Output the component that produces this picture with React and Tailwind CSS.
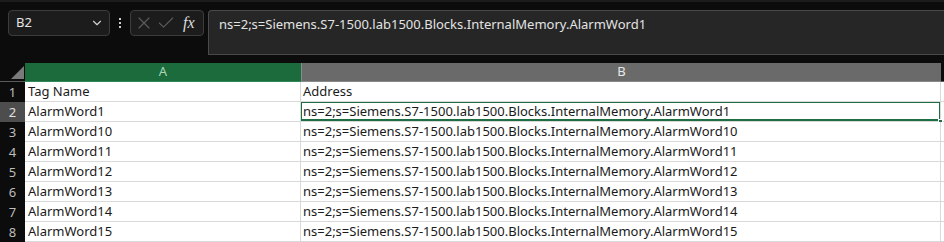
import { ChevronDown, X, Check } from 'lucide-react';

const rows = [
  ['Tag Name', 'Address'],
  ['AlarmWord1', 'ns=2;s=Siemens.S7-1500.lab1500.Blocks.InternalMemory.AlarmWord1'],
  ['AlarmWord10', 'ns=2;s=Siemens.S7-1500.lab1500.Blocks.InternalMemory.AlarmWord10'],
  ['AlarmWord11', 'ns=2;s=Siemens.S7-1500.lab1500.Blocks.InternalMemory.AlarmWord11'],
  ['AlarmWord12', 'ns=2;s=Siemens.S7-1500.lab1500.Blocks.InternalMemory.AlarmWord12'],
  ['AlarmWord13', 'ns=2;s=Siemens.S7-1500.lab1500.Blocks.InternalMemory.AlarmWord13'],
  ['AlarmWord14', 'ns=2;s=Siemens.S7-1500.lab1500.Blocks.InternalMemory.AlarmWord14'],
  ['AlarmWord15', 'ns=2;s=Siemens.S7-1500.lab1500.Blocks.InternalMemory.AlarmWord15'],
];

const font = { fontFamily: '"Noto Sans", "Open Sans", sans-serif' };

export default function App() {
  return (
    <div className="w-[944px] h-[242px] overflow-hidden bg-[#0c0c0c] text-[13px]" style={font}>
      {/* Formula bar area */}
      <div className="h-[2px] bg-[#1c1c1c]" />
      <div className="flex items-start h-[61px] pt-[8px]">
        <div className="ml-[8px] w-[102px] h-[26px] rounded-[4px] border border-[#3c3c3c] bg-[#1c1c1c] flex items-center justify-between pl-[7px] pr-[5px] text-[#e6e6e6]">
          <span>B2</span>
          <ChevronDown className="w-[14px] h-[14px] text-[#cfcfcf]" strokeWidth={2} />
        </div>
        <div className="w-[20px] h-[26px] flex flex-col items-center justify-center gap-[2px]">
          <span className="w-[2px] h-[2px] bg-[#cfcfcf]" />
          <span className="w-[2px] h-[2px] bg-[#cfcfcf]" />
          <span className="w-[2px] h-[2px] bg-[#cfcfcf]" />
        </div>
        <div className="w-[74px] h-[26px] rounded-[4px] border border-[#3c3c3c] bg-[#1c1c1c] flex items-center pl-[3px] gap-[2px]">
          <X className="w-[20px] h-[20px] text-[#5c5c5c]" strokeWidth={1.3} />
          <Check className="w-[20px] h-[20px] text-[#5c5c5c]" strokeWidth={1.3} />
          <span className="ml-[5px] text-[#dcdcdc] italic text-[16px] leading-none" style={{ fontFamily: '"Liberation Serif", serif' }}>fx</span>
        </div>
        <div className="ml-[4px] flex-1 h-[45px] rounded-tl-[4px] border border-r-0 border-[#4a4a4a] bg-[#262626] pl-[10px] pt-[4px] text-[#e3e3e3]">
          ns=2;s=Siemens.S7-1500.lab1500.Blocks.InternalMemory.AlarmWord1
        </div>
      </div>

      {/* Grid */}
      <div className="grid grid-cols-[25px_276px_640px_1fr]">
        <div className="h-[19px] bg-[#0c0c0c] relative border-b border-[#5a5a5a]">
          <div className="absolute right-[1px] bottom-[2px] w-0 h-0 border-l-[13px] border-l-transparent border-b-[13px] border-b-[#7a7a7a]" />
        </div>
        <div className="h-[19px] bg-[#1b6b3c] text-[#a9d8b8] flex items-center justify-center border-b border-[#2e8b57]">A</div>
        <div className="h-[19px] bg-[#6a6a6a] text-[#e8e8e8] flex items-center justify-center border-l border-[#8a8a8a] border-b border-[#5a5a5a]">B</div>
        <div className="h-[19px] bg-[#0c0c0c] border-b border-[#5a5a5a]" />

        {rows.map((r, i) => {
          const sel = i === 1;
          return [
            <div
              key={`h${i}`}
              className={`h-[20px] pt-[1px] flex items-center justify-center ${sel ? 'bg-[#4d4d4d] text-[#e0e0e0]' : 'bg-[#0c0c0c] text-[#bdbdbd]'}`}
            >
              {i + 1}
            </div>,
            <div key={`a${i}`} className="h-[20px] pt-[1px] bg-white border-r border-b border-[#d9d9d9] pl-[3px] flex items-center text-[#1a1a1a] whitespace-nowrap overflow-hidden">
              {r[0]}
            </div>,
            <div key={`b${i}`} className="h-[20px] pt-[1px] bg-white border-r border-b border-[#d9d9d9] relative flex items-center text-[#1a1a1a] whitespace-nowrap overflow-hidden">
              <span className="pl-[2px]">{r[1]}</span>
              {sel && <div className="absolute left-[-1px] top-[-1px] right-[-1px] bottom-0 border-2 border-[#1e6e43]" />}
            </div>,
            <div key={`c${i}`} className="h-[20px] bg-white border-b border-[#d9d9d9] relative">
              {sel && <div className="absolute left-[-3px] bottom-[-3px] w-[5px] h-[5px] bg-[#1e6e43] border border-white" />}
            </div>,
          ];
        })}
      </div>
    </div>
  );
}
